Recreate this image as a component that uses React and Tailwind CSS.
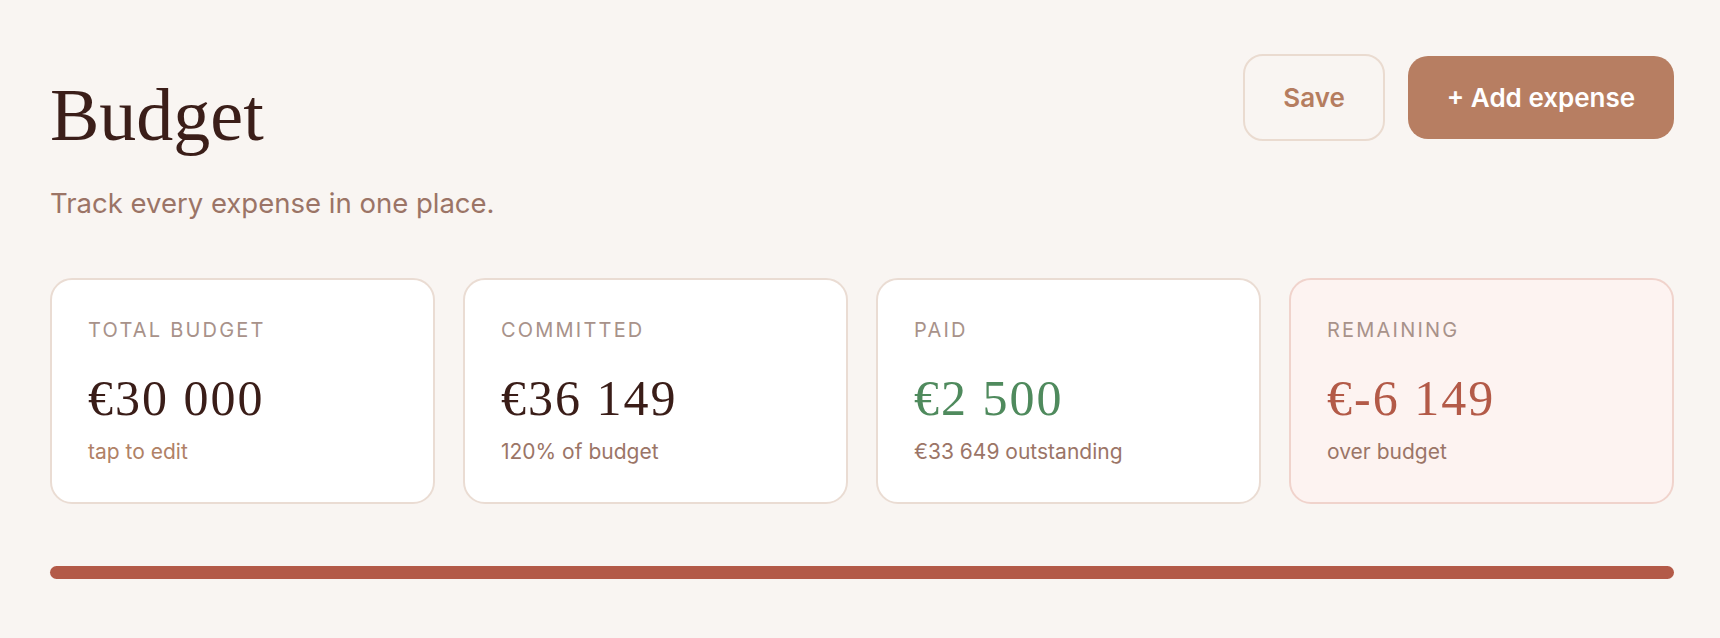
import React from "react";

const cards = [
  { label: "TOTAL BUDGET", amount: "€30 000", note: "tap to edit", alert: false, amountColor: "text-[#3a1d18]", noteColor: "text-[#b08166]" },
  { label: "COMMITTED", amount: "€36 149", note: "120% of budget", alert: false, amountColor: "text-[#3a1d18]", noteColor: "text-[#9b7567]" },
  { label: "PAID", amount: "€2 500", note: "€33 649 outstanding", alert: false, amountColor: "text-[#4f8a5d]", noteColor: "text-[#9b7567]" },
  { label: "REMAINING", amount: "€-6 149", note: "over budget", alert: true, amountColor: "text-[#b35a48]", noteColor: "text-[#9b7567]" },
];

const StatCard = ({ card }) => (
  <div
    className={`rounded-[22px] border-2 px-[36px] pt-9 pb-[36px] ${
      card.alert ? "bg-[#fdf3f1] border-[#f0d3cc]" : "bg-white border-[#eadcd3]"
    }`}
  >
    <div className="text-[20px] leading-[28px] tracking-[0.11em] text-[#a8928a]">{card.label}</div>
    <div
      className={`mt-[30px] font-['Liberation_Serif',serif] text-[50px] leading-[48px] tracking-[0.04em] ${card.amountColor}`}
    >
      {card.amount}
    </div>
    <div className={`mt-4 text-[21px] leading-[28px] ${card.noteColor}`}>{card.note}</div>
  </div>
);

export default function App() {
  return (
    <div className="min-h-screen bg-[#f9f5f2] pl-[50px] pr-[46px] pt-[54px] pb-10 font-['Inter','Noto_Sans',sans-serif]">
      {/* Encabezado */}
      <div className="flex items-start justify-between">
        <div>
          <h1 className="mt-6 font-['Liberation_Serif',serif] text-[74px] leading-[74px] text-[#3b1e19]">
            Budget
          </h1>
          <p className="mt-[33px] text-[27.5px] leading-[36px] text-[#9b7466]">
            Track every expense in one place.
          </p>
        </div>
        <div className="flex items-center gap-[23px]">
          <button className="h-[87px] w-[142px] rounded-[20px] border-2 border-[#eadbd0] text-[26px] font-semibold text-[#b57d60]">
            Save
          </button>
          <button className="h-[83px] w-[266px] rounded-[20px] bg-[#b77e62] text-[26px] font-semibold text-white">
            + Add expense
          </button>
        </div>
      </div>

      {/* Tarjetas de resumen */}
      <div className="mt-[57px] grid grid-cols-4 gap-[28px]">
        {cards.map((card) => (
          <StatCard key={card.label} card={card} />
        ))}
      </div>

      {/* Barra de progreso */}
      <div className="mt-[62px] h-[13px] w-full rounded-full bg-[#b35a48]"></div>
    </div>
  );
}
